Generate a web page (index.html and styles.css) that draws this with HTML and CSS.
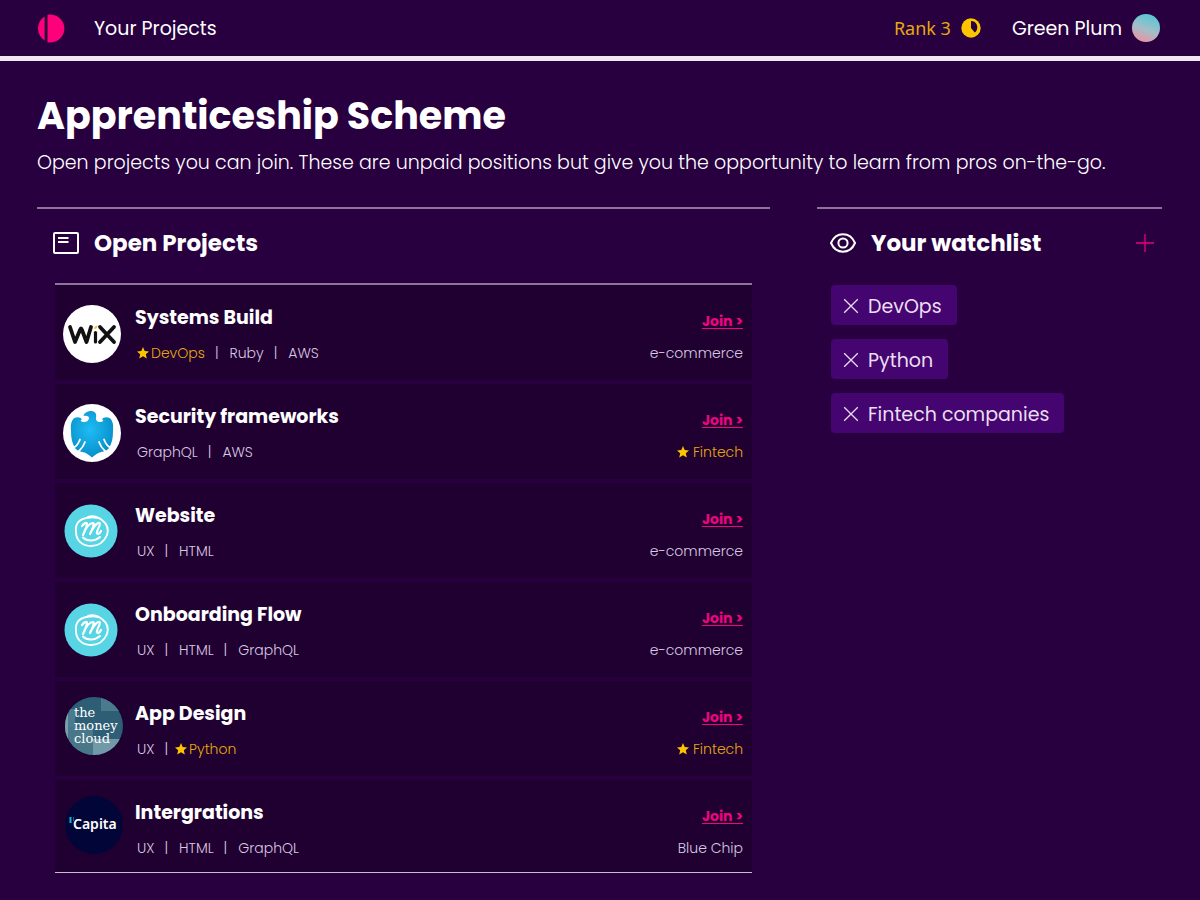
FILE: index.html
```html
<!DOCTYPE html>
<html lang="en">
<head>
    <meta charset="UTF-8">
    <meta name="viewport" content="width=device-width, initial-scale=1">
    <title>Apprenticeship Scheme</title>
    <link rel="stylesheet" href="styles.css">
</head>
<body>
    <!-- shared icons -->
    <svg class="sprite" aria-hidden="true">
        <symbol id="star" viewBox="0 0 12 12">
            <path d="M6 0 L7.7 4 L12 4.4 L8.8 7.3 L9.8 11.6 L6 9.3 L2.2 11.6 L3.2 7.3 L0 4.4 L4.3 4 Z"/>
        </symbol>
        <symbol id="cross" viewBox="0 0 16 16">
            <path d="M1.2 1.2 L14.8 14.8 M14.8 1.2 L1.2 14.8" fill="none" stroke="currentColor" stroke-width="1.3"/>
        </symbol>
        <symbol id="smile" viewBox="0 0 54 54">
            <circle cx="27" cy="27" r="26.5" fill="#57d5e5"/>
            <g fill="none" stroke="#fff" stroke-linecap="round" stroke-linejoin="round">
                <path d="M24 13 C29 11 34 13 38 16 C43 20 45 25 43 31 C40 38 34 42 27 42 C19 42 12 37 12 28 C11 20 15 14 26 13.5 C29 13 31 13 33 14" stroke-width="1.9"/>
                <path d="M18 22 C20 19 23 18 23 20 C23 23 20 28 19 31 C21 26 25 19 29 19 C31 19 28 26 26 30 C28 25 33 18 35.5 19 C37.5 20 32 27 33 29.5 C34 31 36 29 37 27" stroke-width="2.2"/>
                <path d="M19 33.5 C23 37.5 31 37.5 36 33" stroke-width="2"/>
            </g>
        </symbol>
    </svg>

    <header class="topbar">
        <a href="#" class="brand" aria-label="Home">
            <svg width="30" height="30" viewBox="0 0 30 30">
                <path d="M10.5 1.8 A14 14 0 1 1 10.5 29.2 Z" fill="#ff007a"/>
                <path d="M7.6 3.6 A14 14 0 0 0 7.6 27.4 Z" fill="#ff007a"/>
            </svg>
        </a>
        <nav>
            <a href="#">Your Projects</a>
        </nav>
        <div class="rank">
            Rank 3
            <svg width="20" height="20" viewBox="0 0 20 20">
                <circle cx="10" cy="10" r="9.7" fill="#ffc400"/>
                <path d="M10 3 C14.5 3 16.5 6.5 16.3 9.5 C16.2 12 15 13.8 13.8 14.6 L10 10 Z" fill="#28003f"/>
            </svg>
        </div>
        <a href="#" class="user">
            Green Plum
            <span class="avatar"></span>
        </a>
    </header>

    <main>
        <h1>Apprenticeship Scheme</h1>
        <p class="intro">Open projects you can join. These are unpaid positions but give you the opportunity to learn from pros on-the-go.</p>

        <div class="columns">
            <section class="panel">
                <div class="panel-head">
                    <svg width="26" height="22" viewBox="0 0 26 22" fill="none" stroke="#fff" stroke-width="2">
                        <rect x="1" y="1" width="24" height="20" rx="1"/>
                        <path d="M5 6 H15.5 M5 10 H15.5"/>
                    </svg>
                    <h2>Open Projects</h2>
                </div>
                <ul class="projects">
                    <li>
                        <svg class="logo" viewBox="0 0 58 58" role="img" aria-label="Wix">
                            <circle cx="29" cy="29" r="29" fill="#fff"/>
                            <g fill="none" stroke="#111" stroke-width="3.8" stroke-linecap="round" stroke-linejoin="round">
                                <path d="M7 22 L12 37 L17 25 Q18 22 19 25 L23.5 37 L28 22"/>
                                <path d="M32.5 27.5 V37" stroke-width="3.2"/>
                                <path d="M37 22 L51 37 M51 22 L37 37"/>
                            </g>
                            <path d="M31 24 Q31 21 34.5 20.5 Q34.5 24 31 24 Z" fill="#f5c12e"/>
                        </svg>
                        <div class="info">
                            <h3>Systems Build</h3>
                            <div class="tags">
                                <span class="match"><svg><use href="#star"/></svg>DevOps</span>
                                <span>Ruby</span>
                                <span>AWS</span>
                            </div>
                        </div>
                        <div class="side">
                            <a href="#">Join &gt;</a>
                            <span>e-commerce</span>
                        </div>
                    </li>
                    <li>
                        <svg class="logo" viewBox="0 0 58 58" role="img" aria-label="Barclays">
                            <defs>
                                <radialGradient id="eagle" cx="0.45" cy="0.4" r="0.6">
                                    <stop offset="0" stop-color="#1fbcf3"/>
                                    <stop offset="1" stop-color="#078fcb"/>
                                </radialGradient>
                            </defs>
                            <circle cx="29" cy="29" r="29" fill="#fff"/>
                            <path d="M20.5 12 C21 8.5 25 7 28.5 7 C32 7 34 10 33 14 C32.500 16.500 35 18.500 38 18 C40.500 17.500 41 16 39 15.500 C40 13 44 12.500 46.500 14 C50 16.500 50.500 21 50 27 C50 34 49 39 46 44 C44 47 40 47.500 36.500 48.500 C33.500 49.500 31.500 51.500 29 53.500 C26.500 51.500 24.500 49.500 21.500 48.500 C18 47.500 14 47 12 44 C9 39 8 34 8 27 C7.500 21 8 16.500 11.500 14 C14 12.500 18 13 19 15.500 C17 16 17.500 17.500 20 18 C23 18.500 26 16.500 26 14 C26 12 23 11.500 20.5 12 Z" fill="url(#eagle)"/>
                            <path d="M17 35.5 Q15 41 11 43.500 M22 38 Q20 43.500 16 47 M41 35.5 Q43 41 47 43.500 M36 38 Q38 43.500 42 47" fill="none" stroke="#fff" stroke-width="1.8" stroke-linecap="round"/>
                        </svg>
                        <div class="info">
                            <h3>Security frameworks</h3>
                            <div class="tags">
                                <span>GraphQL</span>
                                <span>AWS</span>
                            </div>
                        </div>
                        <div class="side">
                            <a href="#">Join &gt;</a>
                            <span class="match"><svg><use href="#star"/></svg>Fintech</span>
                        </div>
                    </li>
                    <li>
                        <svg class="logo small"><use href="#smile"/></svg>
                        <div class="info">
                            <h3>Website</h3>
                            <div class="tags">
                                <span>UX</span>
                                <span>HTML</span>
                            </div>
                        </div>
                        <div class="side">
                            <a href="#">Join &gt;</a>
                            <span>e-commerce</span>
                        </div>
                    </li>
                    <li>
                        <svg class="logo small"><use href="#smile"/></svg>
                        <div class="info">
                            <h3>Onboarding Flow</h3>
                            <div class="tags">
                                <span>UX</span>
                                <span>HTML</span>
                                <span>GraphQL</span>
                            </div>
                        </div>
                        <div class="side">
                            <a href="#">Join &gt;</a>
                            <span>e-commerce</span>
                        </div>
                    </li>
                    <li>
                        <svg class="logo wide" viewBox="0 0 58 58">
                            <clipPath id="round"><circle cx="29" cy="29" r="29"/></clipPath>
                            <g clip-path="url(#round)">
                                <rect width="58" height="58" fill="#2d5e76"/>
                                <path d="M36 0 H58 V14 H36 Z M0 12 H10 V30 H0 Z" fill="#4a7b8d"/>
                                <path d="M0 30 H28 V58 H0 Z" fill="#497789"/>
                                <path d="M28 42 H58 V58 H28 Z" fill="#7199a8"/>
                                <path d="M0 14 H3 V44 H0 Z" fill="#7ba0ac"/>
                            </g>
                            <g class="cloud-text">
                                <text x="9" y="20">the</text>
                                <text x="9" y="33">money</text>
                                <text x="9" y="46">cloud</text>
                            </g>
                        </svg>
                        <div class="info">
                            <h3>App Design</h3>
                            <div class="tags">
                                <span>UX</span>
                                <span class="match"><svg><use href="#star"/></svg>Python</span>
                            </div>
                        </div>
                        <div class="side">
                            <a href="#">Join &gt;</a>
                            <span class="match"><svg><use href="#star"/></svg>Fintech</span>
                        </div>
                    </li>
                    <li>
                        <svg class="logo wide" viewBox="0 0 58 58">
                            <circle cx="29" cy="29" r="29" fill="#020538"/>
                            <path d="M5.5 21 V27" stroke="#18b7cf" stroke-width="2"/>
                            <path d="M8.5 21 V25" stroke="#20648a" stroke-width="1"/>
                            <text x="8" y="33" class="capita-text">Capita</text>
                        </svg>
                        <div class="info">
                            <h3>Intergrations</h3>
                            <div class="tags">
                                <span>UX</span>
                                <span>HTML</span>
                                <span>GraphQL</span>
                            </div>
                        </div>
                        <div class="side">
                            <a href="#">Join &gt;</a>
                            <span>Blue Chip</span>
                        </div>
                    </li>
                </ul>
            </section>

            <section class="panel watchlist">
                <div class="panel-head">
                    <svg width="26" height="20" viewBox="0 0 26 20" fill="none" stroke="#fff" stroke-width="2">
                        <path d="M1 10 C6 -1.6 20 -1.6 25 10 C20 21.6 6 21.6 1 10 Z"/>
                        <circle cx="13" cy="10" r="4.6"/>
                    </svg>
                    <h2>Your watchlist</h2>
                    <button type="button" class="add" aria-label="Add to watchlist">
                        <svg width="20" height="20" viewBox="0 0 20 20">
                            <path d="M10 1 V19 M1 10 H19" stroke="#e6007e" stroke-width="1.3"/>
                        </svg>
                    </button>
                </div>
                <ul class="chips">
                    <li><button type="button" aria-label="Remove DevOps"><svg><use href="#cross"/></svg></button>DevOps</li>
                    <li><button type="button" aria-label="Remove Python"><svg><use href="#cross"/></svg></button>Python</li>
                    <li><button type="button" aria-label="Remove Fintech companies"><svg><use href="#cross"/></svg></button>Fintech companies</li>
                </ul>
            </section>
        </div>
    </main>
</body>
</html>
```

FILE: styles.css
```css
*{
    box-sizing: border-box;
    padding: 0;
    margin: 0;
}
body{
    background: #28003f;
    color: #fff;
    font-family: Poppins, Inter, sans-serif;
    font-size: 19px;
}
a{
    color: inherit;
    text-decoration: none;
}
ul{
    list-style: none;
}
button{
    background: none;
    border: none;
    color: inherit;
    cursor: pointer;
}
svg{
    display: block;
    flex-shrink: 0;
}
.sprite{
    position: absolute;
    width: 0;
    height: 0;
}

/* top bar */
.topbar{
    display: flex;
    align-items: center;
    height: 61px;
    padding: 0 40px 0 37px;
    border-bottom: 5px solid #f0e6f4;
}
.topbar nav{
    margin-left: 27px;
    margin-right: auto;
}
.rank{
    display: flex;
    align-items: center;
    gap: 10px;
    margin-right: 31px;
    color: #e5a90f;
    font-family: "Noto Sans", sans-serif;
    font-size: 18px;
}
.user{
    display: flex;
    align-items: center;
    gap: 10px;
}
.avatar{
    width: 28px;
    height: 28px;
    border-radius: 50%;
    background: linear-gradient(200deg, #5fc6d4 15%, #a5bdc6 55%, #f28f9f 95%);
}

main{
    padding: 32px 38px 27px 37px;
}
h1{
    font-size: 38px;
    line-height: 46px;
}
.intro{
    margin-top: 9px;
    font-weight: 300;
    line-height: 30px;
}
.columns{
    display: grid;
    grid-template-columns: 17fr 8fr;
    gap: 47px;
    align-items: start;
    margin-top: 29px;
}
.panel{
    border-top: 2px solid #8d749b;
}
.panel-head{
    display: flex;
    align-items: center;
    gap: 15px;
    height: 74px;
    padding: 0 16px 6px;
}
h2{
    font-size: 23px;
}

/* project list */
.projects{
    display: flex;
    flex-direction: column;
    gap: 4px;
    margin: 0 18px;
    border-top: 2px solid #8d749b;
    border-bottom: 1px solid #c9bbd1;
}
.projects li{
    display: flex;
    height: 95px;
    padding: 20px 9px 0 8px;
    background: #200031;
}
.projects li:last-child{
    height: 92px;
}
.logo{
    width: 58px;
    height: 58px;
    margin-right: 14px;
}
.logo.small{
    width: 54px;
    height: 54px;
    margin: 1px 17px 0 1px;
}
.logo.wide{
    margin: -4px 12px 0 2px;
}
.cloud-text{
    fill: #fff;
    font-family: "DejaVu Serif", serif;
    font-size: 13px;
}
.capita-text{
    fill: #fff;
    font-family: "Noto Sans", sans-serif;
    font-size: 14px;
    font-weight: 600;
}
.info{
    flex: 1;
}
h3{
    font-size: 19px;
    line-height: 26px;
}
.tags{
    display: flex;
    margin-top: 12px;
    padding-left: 2px;
}
.tags,
.side span{
    color: #d9c9e2;
    font-size: 14px;
    font-weight: 300;
    line-height: 20px;
}
.tags span + span::before{
    content: "|";
    margin: 0 11px 0 10px;
    color: #d9c9e2;
}
.tags .match,
.side .match{
    display: flex;
    align-items: center;
    gap: 2px;
    color: #e5a90f;
}
.side .match{
    gap: 4px;
}
.match svg{
    width: 12px;
    height: 12px;
    fill: #ffc400;
}
.tags span + .match::before{
    margin-right: 5px;
}
.side{
    display: flex;
    flex-direction: column;
    align-items: flex-end;
    gap: 12px;
    padding-top: 6px;
}
.side a{
    color: #f0047f;
    font-size: 14px;
    font-weight: bold;
    line-height: 20px;
    text-decoration: underline;
    text-decoration-thickness: 1px;
    text-underline-offset: 2px;
}

/* watchlist */
.watchlist .panel-head{
    padding: 0 7px 6px 13px;
}
.add{
    margin-left: auto;
}
.chips{
    display: flex;
    flex-direction: column;
    align-items: flex-start;
    gap: 14px;
    padding: 2px 14px;
}
.chips li{
    display: flex;
    align-items: center;
    gap: 9px;
    height: 40px;
    padding: 2px 15px 0 12px;
    border-radius: 4px;
    background: #450570;
    color: #eadff0;
}
.chips svg{
    width: 16px;
    height: 16px;
}
```
